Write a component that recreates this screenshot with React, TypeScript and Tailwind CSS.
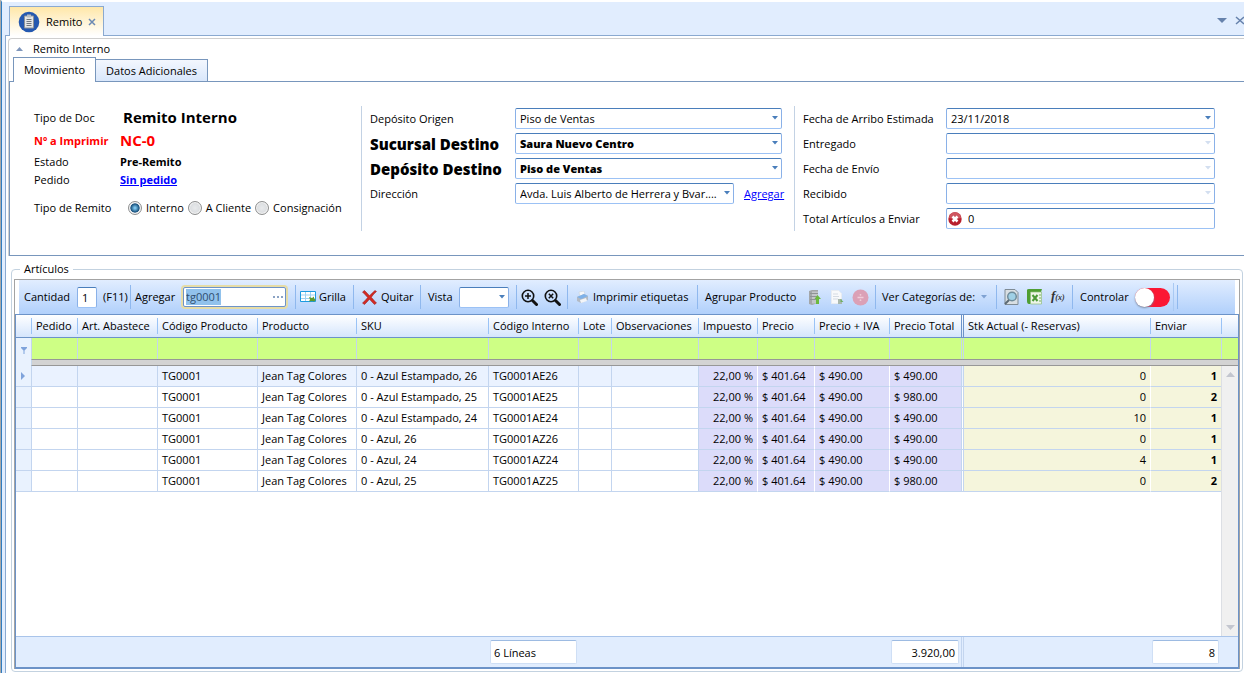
import type { ReactNode } from "react";

const rows = [
  { sku: "0 - Azul Estampado, 26", code: "TG0001AE26", total: "$ 490.00", stock: "0", qty: "1" },
  { sku: "0 - Azul Estampado, 25", code: "TG0001AE25", total: "$ 980.00", stock: "0", qty: "2" },
  { sku: "0 - Azul Estampado, 24", code: "TG0001AE24", total: "$ 490.00", stock: "10", qty: "1" },
  { sku: "0 - Azul, 26", code: "TG0001AZ26", total: "$ 490.00", stock: "0", qty: "1" },
  { sku: "0 - Azul, 24", code: "TG0001AZ24", total: "$ 490.00", stock: "4", qty: "1" },
  { sku: "0 - Azul, 25", code: "TG0001AZ25", total: "$ 980.00", stock: "0", qty: "2" },
];

const headers = [
  "Pedido",
  "Art. Abastece",
  "Código Producto",
  "Producto",
  "SKU",
  "Código Interno",
  "Lote",
  "Observaciones",
  "Impuesto",
  "Precio",
  "Precio + IVA",
  "Precio Total",
  "Stk Actual (- Reservas)",
  "Enviar",
];

const fieldBox =
  "h-[21px] w-full appearance-none rounded-xs border border-[#8ab1e8] border-t-[#4a7ebb] border-b-[#9cc2f5] bg-white px-1 text-[11px] leading-4 outline-none";

const Columns = () => (
  <colgroup>
    <col className="w-[15px]" />
    <col className="w-[46px]" />
    <col className="w-20" />
    <col className="w-[100px]" />
    <col className="w-[99px]" />
    <col className="w-[132px]" />
    <col className="w-[90px]" />
    <col className="w-[33px]" />
    <col className="w-[87px]" />
    <col className="w-[59px]" />
    <col className="w-[57px]" />
    <col className="w-[75px]" />
    <col className="w-[72px]" />
    <col />
    <col className="w-[71px]" />
  </colgroup>
);

const Caret = ({ className = "text-[#4a7ebb]" }: { className?: string }) => (
  <svg className={className} width="6" height="4" viewBox="0 0 6 4" aria-hidden="true">
    <path d="M0 0h6L3 3.5z" fill="currentColor" />
  </svg>
);

type ComboProps = { id: string; value: string; bold?: boolean };

const Combo = ({ id, value, bold }: ComboProps) => (
  <div className="relative flex-1">
    <select
      id={id}
      className={`${fieldBox} truncate pr-3 ${bold ? "font-extrabold" : ""}`}
    >
      <option>{value}</option>
    </select>
    <span className="pointer-events-none absolute top-2 right-1">
      <Caret />
    </span>
  </div>
);

type DateFieldProps = { id: string; label: string; value?: string };

const DateField = ({ id, label, value }: DateFieldProps) => (
  <div className="flex items-center">
    <label htmlFor={id} className="w-[143px] shrink-0">
      {label}
    </label>
    <div className="relative flex-1">
      <input id={id} type="text" defaultValue={value} disabled={!value} className={fieldBox} />
      <button
        type="button"
        aria-label={`Abrir ${label}`}
        disabled={!value}
        className="absolute top-2 right-1"
      >
        <Caret className={value ? "text-[#4a7ebb]" : "text-[#d3dff0]"} />
      </button>
    </div>
  </div>
);

const Radio = ({ label, checked }: { label: string; checked?: boolean }) => (
  <label className="flex items-center gap-1">
    <input
      type="radio"
      name="tipo"
      defaultChecked={checked}
      className="size-3.5 appearance-none rounded-full border border-[#8e8f8f] bg-radial from-[#e8eaec] to-[#d2d5d8] shadow-[inset_0_0_0_1px_#f4f4f4] checked:from-[#7cc4ec] checked:from-10% checked:via-[#14507c] checked:via-50% checked:to-[#e4e8ec] checked:to-60%"
    />
    {label}
  </label>
);

const Group = ({ className, children }: { className: string; children: ReactNode }) => (
  <div className={`flex h-6 shrink-0 items-center ${className}`}>{children}</div>
);

const sep = "border-l border-[#8fb8ee]";

const Magnifier = ({ children }: { children: ReactNode }) => (
  <svg width="17" height="17" viewBox="0 0 17 17" fill="none" stroke="#111" aria-hidden="true">
    <circle cx="7" cy="7" r="5.7" strokeWidth="1.6" />
    <path d="M11.5 11.5l4 4" strokeWidth="3" strokeLinecap="round" />
    {children}
  </svg>
);

const Toolbar = () => (
  <div className="flex h-[34px] items-center bg-linear-to-b from-[#e1edff] to-[#b1d0fb] pl-[5px]">
    <Group className="w-[106px]">
      <label htmlFor="cantidad" className="w-[53px]">
        Cantidad
      </label>
      <div className="w-5">
        <input id="cantidad" type="text" defaultValue="1" className={fieldBox} />
      </div>
      <span className="pl-1.5">(F11)</span>
    </Group>
    <Group className={`w-[165px] ${sep} pl-1`}>
      <label htmlFor="agregar" className="w-[46px] shrink-0">
        Agregar
      </label>
      <div className="relative flex w-[107px] items-center rounded-sm border-2 border-[#e6dca6]">
        <div className="flex h-5 w-full items-center rounded-xs border border-[#6d93c9] bg-white pl-0.5">
          <input
            id="agregar"
            type="text"
            defaultValue="tg0001"
            className="h-4 w-[35px] bg-[#91c2ec] text-[11px] text-[#2f4f6f] outline-none"
          />
          <button type="button" aria-label="Buscar" className="ml-auto flex gap-0.5 pr-0.5">
            <span className="size-0.5 bg-[#8ba3c4]" />
            <span className="size-0.5 bg-[#8ba3c4]" />
            <span className="size-0.5 bg-[#8ba3c4]" />
          </button>
        </div>
      </div>
    </Group>
    <Group className={`w-[58px] ${sep} pl-1`}>
      <button type="button" className="flex items-center gap-0.5">
        <svg width="17" height="12" viewBox="0 0 17 12" aria-hidden="true">
          <path d="M.5.5h15v10H.5z" fill="#fff" stroke="#1c9be0" />
          <path d="M1 4h14M1 7.5h14M5.5 1v9M10.5 1v9" stroke="#9ed2f2" />
          <path d="M9 6l3 1 2-1.500v2l2 1.500-2 1.500-2-.5-3 .5 1-2z" fill="#5e9b2d" />
        </svg>
        Grilla
      </button>
    </Group>
    <Group className={`w-[67px] ${sep} pl-2`}>
      <button type="button" className="flex items-center gap-1">
        <svg width="15" height="15" viewBox="0 0 15 15" aria-hidden="true">
          <path
            d="M.5 2L2.5.5Q5 3 7.5 5.8 10 3 13 .5l1.5 1Q11 4.5 9.3 7.3 11.500 10 14.500 13l-2 1.500Q10 12 7.500 9.200 5 12 2.500 14.500L.5 13Q3.500 10.500 5.700 7.500 3 4.500.5 2z"
            fill="#d42a24"
            stroke="#8e1512"
            strokeWidth=".5"
          />
        </svg>
        Quitar
      </button>
    </Group>
    <Group className={`w-24 ${sep} pl-[7px]`}>
      <label htmlFor="vista" className="w-[31px]">
        Vista
      </label>
      <div className="flex w-[50px]">
        <Combo id="vista" value="" />
      </div>
    </Group>
    <Group className={`w-[51px] ${sep} gap-1.5 pl-1`}>
      <button type="button" aria-label="Acercar">
        <Magnifier>
          <path d="M7 4v6M4 7h6" strokeWidth="1.500" />
        </Magnifier>
      </button>
      <button type="button" aria-label="Quitar zoom">
        <Magnifier>
          <path d="M4.800 4.800l4.400 4.400M9.200 4.800L4.800 9.200" strokeWidth="1.500" />
        </Magnifier>
      </button>
    </Group>
    <Group className={`w-[130px] ${sep} pl-2`}>
      <button type="button" className="flex items-center gap-1">
        <svg width="13" height="13" viewBox="0 0 13 13" aria-hidden="true">
          <path d="M3 1l5-1 1 4-5 2z" fill="#f5f7fa" stroke="#c4ccd6" strokeWidth=".5" />
          <path d="M1 6l7-3 4 2v4l-7 3-4-2z" fill="#b3bac4" />
          <path d="M1 6l7-3 4 2-7 3z" fill="#7fb2ea" />
          <path d="M4 9l6-2 1 3-6 2z" fill="#f3f5f8" />
        </svg>
        Imprimir etiquetas
      </button>
    </Group>
    <Group className={`w-[178px] ${sep} pl-[7px]`}>
      <span className="w-[103px]">Agrupar Producto</span>
      <button type="button" aria-label="Subir" className="w-[23px]">
        <svg width="13" height="15" viewBox="0 0 13 15" aria-hidden="true">
          <path d="M1 1l3-1h6v13l-6 2-3-1z" fill="#a3a6a9" />
          <path d="M4 1.500h6v12H4z" fill="#c3c6c9" />
          <path d="M2 3.500h8M2 6.500h8M2 9.500h8" stroke="#8f9396" />
          <path d="M9.500 5L13 9h-2v5H8V9H6.500z" fill="#6cba3e" />
        </svg>
      </button>
      <button type="button" aria-label="Documento" className="w-[21px]">
        <svg width="13" height="15" viewBox="0 0 13 15" aria-hidden="true">
          <path d="M.5.5h7l3 3v10H.5z" fill="#f8f9fb" stroke="#e8ecf2" />
          <path d="M2 4h5M2 6.500h6M2 9h5" stroke="#d5dbe3" />
          <path d="M7 9h4v5H7z" fill="#a9b8ad" />
          <path d="M9.500 9l3 3h-3z" fill="#6fae62" />
        </svg>
      </button>
      <button type="button" aria-label="Agrupar">
        <svg width="17" height="17" viewBox="0 0 17 17" aria-hidden="true">
          <circle cx="8.500" cy="8.500" r="8" fill="#dba0b6" />
          <path d="M5.500 8.500h6" stroke="#f0ccd9" strokeWidth="1.500" />
          <circle cx="8.500" cy="5.800" r=".9" fill="#f0ccd9" />
          <circle cx="8.500" cy="11.200" r=".9" fill="#f0ccd9" />
        </svg>
      </button>
    </Group>
    <Group className={`w-[121px] ${sep} pl-1.5`}>
      <button type="button" className="flex items-center gap-1.5">
        Ver Categorías de:
        <Caret className="text-[#7fa2d2]" />
      </button>
    </Group>
    <Group className={`w-[76px] ${sep} gap-2 pl-[7px]`}>
      <button type="button" aria-label="Vista previa">
        <svg width="15" height="16" viewBox="0 0 15 16" aria-hidden="true">
          <path d="M1 .5h10l3 3v12H1z" fill="#d9dfe3" stroke="#7f8b95" />
          <circle cx="8" cy="7.500" r="4.300" fill="#9fd0e6" stroke="#6f8c9c" strokeWidth="1.500" />
          <path d="M5 11l-4 4" stroke="#5c6a74" strokeWidth="2" />
        </svg>
      </button>
      <button type="button" aria-label="Excel">
        <svg width="16" height="16" viewBox="0 0 16 16" aria-hidden="true">
          <path d="M0 1Q0 0 2 0h13l-1 3H4v12H2Q0 15 0 12z" fill="#4f9e33" />
          <path d="M3.500 3h11v12h-11z" fill="#eef5e9" stroke="#8fbd7c" strokeWidth=".7" />
          <path d="M5.500 6l5 6M10.500 6l-5 6" stroke="#4c9a38" strokeWidth="2" />
          <path d="M13 5v8" stroke="#9cc78b" strokeWidth="1.500" strokeDasharray="2 1" />
        </svg>
      </button>
      <button
        type="button"
        aria-label="Fórmula"
        className="font-['Liberation_Serif',serif] text-[13px] font-bold text-[#333] italic"
      >
        f<span className="text-[8px]">(x)</span>
      </button>
    </Group>
    <Group className={`w-[101px] ${sep} pl-[7px]`}>
      <label htmlFor="controlar" className="w-[55px]">
        Controlar
      </label>
      <span className="relative flex items-center">
        <input
          id="controlar"
          type="checkbox"
          role="switch"
          className="h-[19px] w-[35px] appearance-none rounded-full bg-[#fb1733]"
        />
        <span className="pointer-events-none absolute left-0 size-[19px] rounded-full bg-white shadow-[0_1px_2px_#7a8aa0]" />
      </span>
    </Group>
    <div className="h-7 w-1 border-l border-[#a9c9f3]" />
    <div className={`h-6 ${sep}`} />
  </div>
);

const ItemsGrid = () => (
  <div className="flex flex-1 flex-col border border-b-2 border-[#6c93c8] bg-white">
    <table className="w-full table-fixed border-separate border-spacing-0 text-left">
      <Columns />
      <colgroup>
        <col className="w-[17px]" />
      </colgroup>
      <thead>
        <tr className="h-[23px] bg-linear-to-b from-white to-[#d3e4fc]">
          <th className="border-b border-[#6c93c8] p-0" />
          {headers.map((header) => (
            <th
              key={header}
              className={`border-b border-[#6c93c8] p-0 font-normal whitespace-nowrap ${header.startsWith("Stk") ? "border-l-3 [border-left-style:double]" : ""}`}
            >
              <div
                className={
                  header.startsWith("Stk") ? "px-1" : "border-l border-[#9ac3f6] pl-1"
                }
              >
                {header}
              </div>
            </th>
          ))}
          <th className="border-b border-[#6c93c8] p-0">
            <div className="h-4 border-l border-[#9ac3f6]" />
          </th>
        </tr>
      </thead>
      <tbody>
        <tr className="h-[21px] bg-[#ceff85]">
          <td className="bg-[#e9f2fe] p-0">
            <svg className="mx-auto mt-1" width="6" height="7" viewBox="0 0 6 7" aria-hidden="true">
              <path d="M0 0h6v1L3.500 3.500V7h-1V3.500L0 1z" fill="#7fa3db" />
            </svg>
          </td>
          {headers.map((header) => (
            <td
              key={header}
              className={`border-[#c4d6ec] p-0 ${header.startsWith("Stk") ? "border-l-3 [border-left-style:double]" : "border-l"}`}
            />
          ))}
          <td className="border-l border-[#c4d6ec] p-0" />
        </tr>
        <tr className="h-[7px]">
          <td className="bg-[#e9f2fe] p-0" />
          <td
            colSpan={15}
            className="border-t border-b border-l border-[#979797] border-l-[#c4d6ec] bg-[#d3d3d3] p-0"
          />
        </tr>
      </tbody>
    </table>

    <div className="flex flex-1">
      <div className="flex-1">
        <table className="w-full table-fixed border-separate border-spacing-0">
          <Columns />
          <tbody className="[&_td]:border-b [&_td]:border-[#c3d5ef] [&_td]:px-1 [&_td]:py-0 [&_td]:whitespace-nowrap">
            {rows.map((row, i) => (
              <tr key={row.code} className={`h-[21px] ${i === 0 ? "bg-[#eaf2ff]" : ""}`}>
                <td className="bg-[#e9f2fe]">
                  {i === 0 && (
                    <svg width="5" height="8" viewBox="0 0 5 8" aria-hidden="true">
                      <path d="M1 0l4 4-4 4z" fill="#7fa3db" />
                    </svg>
                  )}
                </td>
                <td className="border-l" />
                <td className="border-l" />
                <td className="border-l">TG0001</td>
                <td className="border-l">Jean Tag Colores</td>
                <td className="border-l">{row.sku}</td>
                <td className="border-l">{row.code}</td>
                <td className="border-l" />
                <td className="border-l" />
                <td className="border-l bg-[#dcdcfa] text-right">22,00 %</td>
                <td className="border-l border-l-white! bg-[#dcdcfa]">$ 401.64</td>
                <td className="border-l border-l-white! bg-[#dcdcfa]">$ 490.00</td>
                <td className="border-l border-l-white! bg-[#dcdcfa]">{row.total}</td>
                <td className="border-l-3 bg-[#f5f5dc] bg-clip-padding text-right [border-left-style:double]">
                  {row.stock}
                </td>
                <td className="border-l border-l-white! bg-[#f5f5dc] text-right font-bold">
                  {row.qty}
                </td>
              </tr>
            ))}
          </tbody>
        </table>
      </div>
      <div className="flex w-[17px] flex-col items-center justify-between border-l border-[#dcdfe4] bg-[#f0f0f0] py-1.5">
        <svg width="9" height="5" viewBox="0 0 9 5" aria-hidden="true">
          <path d="M0 5h9L4.500 0z" fill="#c3c6cf" />
        </svg>
        <svg width="9" height="5" viewBox="0 0 9 5" aria-hidden="true">
          <path d="M0 0h9L4.500 5z" fill="#c3c6cf" />
        </svg>
      </div>
    </div>

    <div className="flex h-[31px] border-t border-[#a9c4ea] bg-[#e1edfe]">
      <div className="flex flex-1 items-center">
        <output className="ml-[474px] h-6 w-[87px] rounded-xs border border-[#cfdff5] border-t-[#9dbbe2] bg-white px-[3px] leading-6">
          6 Líneas
        </output>
        <output className="ml-[314px] h-6 w-[68px] rounded-xs border border-[#cfdff5] border-t-[#9dbbe2] bg-white px-[3px] text-right leading-6">
          3.920,00
        </output>
        <div className="ml-0.5 h-full w-[3px] border-x border-[#c3d5ef]" />
      </div>
      <div className="flex w-[86px] items-center">
        <output className="h-6 w-[67px] rounded-xs border border-[#cfdff5] border-t-[#9dbbe2] bg-white px-[3px] text-right leading-6">
          8
        </output>
      </div>
    </div>
  </div>
);

const App = () => {
  return (
    <div className="flex min-h-screen border-l border-[#a9a9a9] bg-[#e1edfe] font-['Open_Sans','Noto_Sans',sans-serif] text-[11px] leading-4 text-black">
      <div className="flex flex-1 flex-col border-t-2 border-l border-t-white border-l-[#2f7cc0] pl-[3px]">
        <header className="flex h-[34px] items-end justify-between border-b border-[#8aa9d0] pl-1">
          <div className="-mb-px flex h-[30px] w-[95px] items-center border border-b-0 border-[#8aa9d0] bg-linear-to-b from-[#ffe7a8] to-white pl-2">
            <button type="button" className="flex items-center gap-1.5">
              <svg width="22" height="22" viewBox="0 0 21 22" aria-hidden="true">
                <circle cx="10.500" cy="11" r="10.300" fill="#2458b0" />
                <path d="M6 5h9v12H6z" fill="#e4e6e8" stroke="#8f9499" />
                <path d="M8.500 3.500h4v3h-4z" fill="#b9bec4" />
                <path d="M8 8.500h5M8 10.500h5M8 12.500h5M8 14.500h5" stroke="#70777e" />
              </svg>
              Remito
            </button>
            <button type="button" aria-label="Cerrar pestaña" className="pl-1.5">
              <svg width="8" height="8" viewBox="0 0 8 8" aria-hidden="true">
                <path d="M1 1l6 6M7 1L1 7" stroke="#6b89b4" strokeWidth="1.500" />
              </svg>
            </button>
          </div>
          <div className="flex h-full items-center gap-2 pt-1">
            <button type="button" aria-label="Ver pestañas">
              <svg width="10" height="5" viewBox="0 0 10 5" aria-hidden="true">
                <path d="M0 0h10L5 5z" fill="#6682ac" />
              </svg>
            </button>
            <button type="button" aria-label="Cerrar">
              <svg width="9" height="9" viewBox="0 0 9 9" aria-hidden="true">
                <path d="M1 1l8 7M9 1L1 8" stroke="#6682ac" strokeWidth="1.500" />
              </svg>
            </button>
          </div>
        </header>

        <main className="flex flex-1 flex-col border-l border-[#8aa9d0] bg-white pt-0.5 pl-0.5">
          <section className="rounded-tl border-t border-l border-[#cfcfcf]">
            <button type="button" className="flex h-[18px] items-center pt-0.5 pl-[7px]">
              <svg width="7" height="4" viewBox="0 0 7 4" aria-hidden="true">
                <path d="M0 4h7L3.500 0z" fill="#7f96bb" />
              </svg>
              <span className="pl-[10px]">Remito Interno</span>
            </button>
            <div className="flex items-end pl-1">
              <button
                type="button"
                className="z-10 -mb-px h-[25px] w-[83px] border border-b-0 border-[#7896bc] bg-white"
              >
                Movimiento
              </button>
              <button
                type="button"
                className="h-[22px] w-[112px] border border-b-0 border-l-0 border-[#7896bc] bg-linear-to-b from-[#f3f7fe] to-[#d9e7fb]"
              >
                Datos Adicionales
              </button>
            </div>

            <form className="grid grid-cols-[351px_433px_1fr] border border-r-0 border-[#7896bc] pt-6 pb-6">
              <div className="grid grid-cols-[86px_1fr] content-start items-center pl-6">
                <span className="leading-[23px]">Tipo de Doc</span>
                <span className="pl-[3px] text-[15px] leading-[23px] font-bold">Remito Interno</span>
                <span className="font-bold whitespace-nowrap text-[#f00]">Nº a Imprimir</span>
                <span className="text-[15px] leading-[23px] font-bold text-[#f00]">NC-0</span>
                <span className="leading-5">Estado</span>
                <span className="font-bold">Pre-Remito</span>
                <span>Pedido</span>
                <a href="#pedido" className="font-bold text-[#00f] underline">
                  Sin pedido
                </a>
                <span className="pt-3">Tipo de Remito</span>
                <div className="flex gap-1 pt-3 pl-2">
                  <Radio label="Interno" checked />
                  <Radio label="A Cliente" />
                  <Radio label="Consignación" />
                </div>
              </div>

              <div className="flex h-[125px] flex-col gap-1 border-l border-[#c3d2e4] pt-0.5 pr-3 pl-2">
                <div className="flex items-center">
                  <label htmlFor="origen" className="w-[145px]">
                    Depósito Origen
                  </label>
                  <Combo id="origen" value="Piso de Ventas" />
                </div>
                <div className="flex items-center">
                  <label htmlFor="sucursal" className="w-[145px] text-[15px] font-extrabold whitespace-nowrap">
                    Sucursal Destino
                  </label>
                  <Combo id="sucursal" value="Saura Nuevo Centro" bold />
                </div>
                <div className="flex items-center">
                  <label htmlFor="destino" className="w-[145px] text-[15px] font-extrabold whitespace-nowrap">
                    Depósito Destino
                  </label>
                  <Combo id="destino" value="Piso de Ventas" bold />
                </div>
                <div className="flex items-center">
                  <label htmlFor="direccion" className="w-[145px]">
                    Dirección
                  </label>
                  <Combo id="direccion" value="Avda. Luis Alberto de Herrera y Bvar...." />
                  <a href="#direccion" className="-mr-2 w-14 pl-[10px] text-[#00f] underline">
                    Agregar
                  </a>
                </div>
              </div>

              <div className="flex h-[125px] flex-col gap-1 border-l border-[#c3d2e4] pt-0.5 pr-[29px] pl-2">
                <DateField id="arribo" label="Fecha de Arribo Estimada" value="23/11/2018" />
                <DateField id="entregado" label="Entregado" />
                <DateField id="envio" label="Fecha de Envío" />
                <DateField id="recibido" label="Recibido" />
                <div className="flex items-center">
                  <label htmlFor="total" className="w-[143px] shrink-0">
                    Total Artículos a Enviar
                  </label>
                  <div className="relative flex-1">
                    <input
                      id="total"
                      type="text"
                      defaultValue="0"
                      className={`${fieldBox} pl-[21px]`}
                    />
                    <svg
                      className="absolute top-1 left-0.5"
                      width="14"
                      height="14"
                      viewBox="0 0 14 14"
                      aria-hidden="true"
                    >
                      <circle cx="7" cy="7" r="6.700" fill="#b8202e" />
                      <path d="M1 6a6 6 0 0112 0Q7 8 1 6z" fill="#cf5660" />
                      <path d="M4.500 4.500l5 5M9.500 4.500l-5 5" stroke="#fff" strokeWidth="2.500" />
                    </svg>
                  </div>
                </div>
              </div>
            </form>
          </section>

          <fieldset className="mt-[5px] mr-px mb-px ml-[3px] flex flex-1 flex-col rounded-sm border border-[#c3d2e0] px-0.5 pb-0.5">
            <legend className="ml-1.5 px-1">Artículos</legend>
            <div className="mt-0.5 flex flex-1 flex-col border border-b-0 border-[#a3a3a3]">
              <div className="px-1">
                <Toolbar />
              </div>
              <ItemsGrid />
            </div>
          </fieldset>
        </main>
      </div>
    </div>
  );
};

export default App;
